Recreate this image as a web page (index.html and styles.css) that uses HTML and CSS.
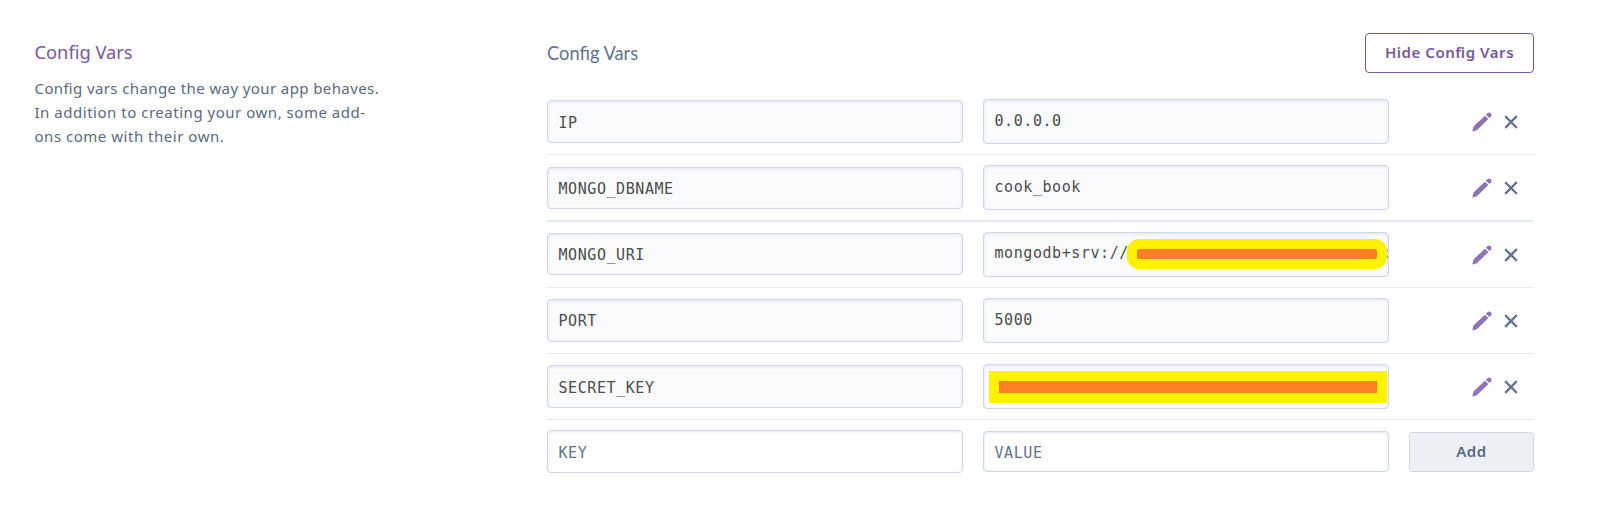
FILE: index.html
```html
<!DOCTYPE html>
<html lang="en">
<head>
<meta charset="utf-8">
<title>Config Vars</title>
<link rel="stylesheet" href="styles.css">
</head>
<body>
<svg width="0" height="0" class="defs" aria-hidden="true">
  <symbol id="pencil" viewBox="0 0 20 20">
    <path d="M.3 19.6 1.2 15.4Q1.4 14.6 2 14L12.9 3.7 16.4 7.1 5.3 17.8Q4.8 18.3 4 18.5Z M13.9 2.8 15.4 1.2Q17-.3 18.5 1.1L18.9 1.5Q20.3 3 19 4.5L17.4 6.1Z"/>
  </symbol>
  <symbol id="cross" viewBox="0 0 14 14">
    <path d="M2 2 12 12M12 2 2 12"/>
  </symbol>
</svg>
<main class="page">
  <aside class="intro">
    <h2 class="intro-title">Config Vars</h2>
    <p class="intro-text">Config vars change the way your app behaves.<br><span class="wide">In addition to creating your own, some add-<br>ons come with their own.</span></p>
  </aside>
  <section class="vars">
    <header class="vars-head">
      <h3 class="vars-title">Config Vars</h3>
      <button class="btn btn-hide">Hide Config Vars</button>
    </header>
    <div class="row">
      <div class="field key">IP</div>
      <div class="field value">0.0.0.0</div>
      <div class="actions"><svg class="pencil"><use href="#pencil"/></svg><svg class="cross"><use href="#cross"/></svg></div>
    </div>
    <div class="row row-strong">
      <div class="field key">MONGO_DBNAME</div>
      <div class="field value">cook_book</div>
      <div class="actions"><svg class="pencil"><use href="#pencil"/></svg><svg class="cross"><use href="#cross"/></svg></div>
    </div>
    <div class="row row-tight">
      <div class="field key">MONGO_URI</div>
      <div class="field value">mongodb+srv://<span class="tail">:</span><span class="mask mask-round"></span></div>
      <div class="actions"><svg class="pencil"><use href="#pencil"/></svg><svg class="cross"><use href="#cross"/></svg></div>
    </div>
    <div class="row row-port">
      <div class="field key">PORT</div>
      <div class="field value">5000</div>
      <div class="actions"><svg class="pencil"><use href="#pencil"/></svg><svg class="cross"><use href="#cross"/></svg></div>
    </div>
    <div class="row">
      <div class="field key">SECRET_KEY</div>
      <div class="field value"><span class="mask mask-square"></span></div>
      <div class="actions"><svg class="pencil"><use href="#pencil"/></svg><svg class="cross"><use href="#cross"/></svg></div>
    </div>
    <div class="row row-new">
      <div class="field key">KEY</div>
      <div class="field value">VALUE</div>
      <button class="btn btn-add">Add</button>
    </div>
  </section>
</main>
</body>
</html>
```
FILE: styles.css
```css
* { box-sizing: border-box; }
body { margin: 0; background: #fff; font-family: "Noto Sans", "Open Sans", sans-serif; color: #596981; overflow: hidden; font-feature-settings: "liga" 1; }
.defs { position: absolute; }
.page { display: flex; width: 1534px; height: 527px; padding-top: 33px; }
.intro { width: 547px; padding-left: 34.5px; flex: none; }
.intro-title { margin: 4px 0 9px; font-size: 18.3px; line-height: 30px; font-weight: 400; color: #79589f; }
.intro-text { margin: 0; font-size: 15px; line-height: 24px; letter-spacing: 0.4px; white-space: nowrap; }
.wide { letter-spacing: 0.52px; }
.vars { flex: 1; }
.vars-head { display: flex; justify-content: space-between; height: 56px; }
.vars-title { margin: 0; font: 400 18.3px/41px Lato, sans-serif; color: #62738d; }
.btn { font: 600 15px/22px "Noto Sans", "Open Sans", sans-serif; border-radius: 4px; padding: 0 0 2px; height: 40px; flex: none; letter-spacing: 0.55px; font-feature-settings: "liga" 1; }
.btn-hide { width: 169px; border: 1px solid #79589f; background: #fff; color: #79589f; }
.btn-add { width: 125px; margin: 12px 0 0 20px; border: 1px solid #cfd7e6; background: #edf1f6; color: #596981; }
.row { display: flex; align-items: flex-start; height: 66px; border-bottom: 1px solid #e6eaf3; }
.row-strong { height: 67px; border-bottom-width: 2px; }
.row-new { border-bottom: 0; }
.field { position: relative; border: 1px solid #cfd7e6; border-radius: 4px; background: #fafbfd; box-shadow: inset 0 1px 3px rgba(180, 192, 215, .38); padding-left: 10.5px; font: 15px/20px "DejaVu Sans Mono", monospace; letter-spacing: 0.57px; color: #4c4c4c; white-space: nowrap; }
.key { width: 416px; height: 43px; margin-top: 11px; padding-top: 12px; }
.row-strong .key { height: 42px; margin-top: 12px; padding-top: 11px; }
.value { width: 406px; height: 45px; margin: 10px 0 0 20px; padding-top: 11px; overflow: hidden; }
.row-tight .key { height: 42px; padding-top: 11px; }
.row-tight .value { height: 45px; padding-top: 10px; }
.row-port .key { padding-top: 11px; }
.row-new .field { background: #fff; color: #62738d; }
.row-new .key { margin-top: 10px; }
.row-new .value { height: 41px; margin-top: 11px; padding-top: 11px; }
.actions { display: flex; align-items: center; gap: 12px; margin: 23px 0 0 83px; height: 20px; }
.pencil { width: 20px; height: 20px; fill: #9072b6; }
.cross { width: 14px; height: 14px; fill: none; stroke: #62738d; stroke-width: 2.3; stroke-linecap: square; }
.mask { position: absolute; background: #ff7f27; border: 10px solid #fff200; }
.mask-round { left: 143px; top: 6px; width: 260px; height: 30px; border-radius: 12px; }
.mask-square { left: 5px; top: 6px; width: 398px; height: 32px; }
.tail { position: absolute; left: 398px; }
```
